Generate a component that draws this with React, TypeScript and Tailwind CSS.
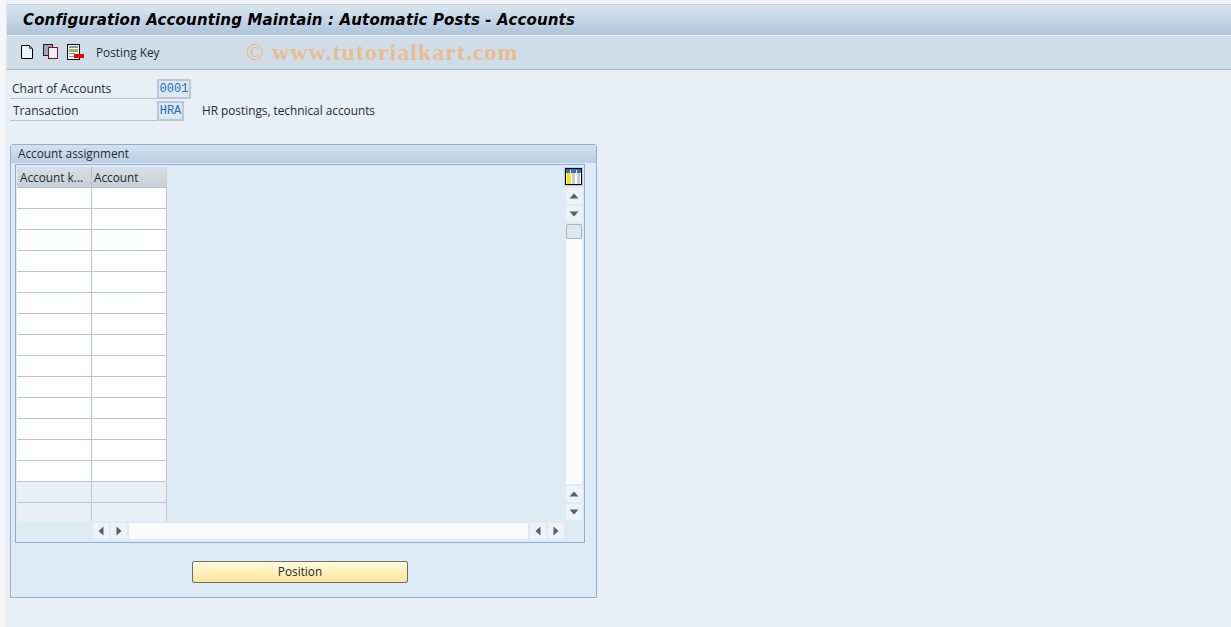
const rows = Array.from({ length: 14 });

function ScrollBtn({ dir }: { dir: 'up' | 'down' | 'left' | 'right' }) {
  const points = {
    up: '0.5,7.5 5,2.5 9.5,7.5',
    down: '0.5,2.5 5,7.5 9.5,2.5',
    left: '7.5,0.5 2.5,5 7.5,9.5',
    right: '2.5,0.5 7.5,5 2.5,9.5',
  }[dir];
  return (
    <div className="w-[16px] h-[16px] bg-[#eef3f9] flex items-center justify-center">
      <svg width="10" height="10" viewBox="0 0 10 10">
        <polygon points={points} fill="#4d6072" />
      </svg>
    </div>
  );
}

export default function App() {
  return (
    <div className="relative w-[1231px] h-[627px] overflow-hidden flex bg-[#f3f6fa] text-[11.8px] text-[#1c2a36] font-['Open_Sans','Noto_Sans',sans-serif]">
      {/* left strip */}
      <div className="w-[7px] shrink-0 bg-[#f4f6f9] border-r border-[#dfe5ec]" />

      <div className="flex-1 flex flex-col">
        <div className="h-[5px] bg-[#f1f3f7] border-b border-[#c3ccd8]" />

        {/* Title */}
        <div className="h-[31px] flex items-center pl-[16px] bg-gradient-to-b from-[#dbe6f0] to-[#aec4da] border-b border-[#e8eef4]">
          <h1 className="font-['DejaVu_Sans',sans-serif] text-[15px] tracking-[0.15px] font-bold italic text-black whitespace-nowrap">
            Configuration Accounting Maintain : Automatic Posts - Accounts
          </h1>
        </div>

        {/* Toolbar */}
        <div className="h-[34px] flex items-center pl-[13px] bg-[#cfdde8] border-b border-[#a9b6c3]">
          <svg className="mb-[2px]" width="14" height="16" viewBox="0 0 14 16">
            <path d="M1.5 1.5H9.5L12.5 4.5V14.5H1.5Z" fill="#eaf5fb" stroke="#000" />
            <path d="M9.5 1.5V4.5H12.5" fill="#7d8b96" stroke="#555" />
          </svg>
          <svg className="ml-[9px] mb-[2px]" width="15" height="15" viewBox="0 0 15 15">
            <rect x="0.5" y="0.5" width="9" height="11" fill="#9fa6ad" stroke="#222" />
            <rect x="5.5" y="3.5" width="9" height="11" fill="#e6f2fb" stroke="#8c1018" />
          </svg>
          <svg className="ml-[9px] mb-[2px]" width="17" height="16" viewBox="0 0 17 16">
            <rect x="0.5" y="0.5" width="12" height="15" fill="#eef3f6" stroke="#111" />
            <rect x="2" y="2" width="9" height="2" fill="#8b96a8" />
            <rect x="2" y="5" width="9" height="3" fill="#9fbb4a" />
            <rect x="2" y="9" width="6" height="1" fill="#8b96a8" />
            <rect x="2" y="12" width="6" height="1" fill="#8b96a8" />
            <rect x="7" y="10" width="10" height="4" fill="#ee0000" />
          </svg>
          <span className="ml-[12px]">Posting Key</span>
        </div>

        {/* Content */}
        <div className="flex-1 bg-[#e8eff7] pt-[7px] pl-[3px] flex flex-col">
          <div className="flex items-end h-[22px]">
            <div className="w-[147px] h-[20px] pl-[2px] border-b border-[#b8c2cc] leading-[20px] text-[12px]">Chart of Accounts</div>
            <div className="w-[34px] h-[20px] bg-[#dce8f2] border-2 border-[#bcc8d2] font-['Liberation_Mono',monospace] text-[12px] text-[#2a6eb0] leading-[16px] text-center">0001</div>
          </div>
          <div className="flex items-end h-[22px]">
            <div className="w-[147px] h-[20px] pl-[3px] border-b border-[#b8c2cc] leading-[20px] text-[12px]">Transaction</div>
            <div className="w-[27px] h-[20px] bg-[#dce8f2] border-2 border-[#bcc8d2] font-['Liberation_Mono',monospace] text-[12px] text-[#2a6eb0] leading-[16px] text-center">HRA</div>
            <span className="ml-[18px] h-[20px] leading-[18px]">HR postings, technical accounts</span>
          </div>

          {/* Panel */}
          <div className="mt-[23px] w-[587px] h-[454px] flex flex-col bg-[#deeaf4] border border-[#8fb0d0] rounded-t-[3px]">
            <div className="h-[18px] pl-[7px] leading-[16px] bg-gradient-to-b from-[#d3e2f0] to-[#b9cfe4]">Account assignment</div>
            <div className="mt-[1px] ml-[4px] w-[570px] h-[379px] border border-[#8fb0d0] flex flex-col">
              <div className="flex-1 flex min-h-0">
                {/* Table */}
                <div className="w-[150px] ml-[1px] mt-[2px] flex flex-col">
                  <div className="h-[21px] flex bg-gradient-to-b from-[#d9dfe6] to-[#c6ced7] border-b border-[#b8c2cc]">
                    <div className="w-[75px] pl-[3px] leading-[20px] border-r border-[#b8c2cc] whitespace-nowrap">Account k...</div>
                    <div className="w-[75px] pl-[2px] leading-[20px]">Account</div>
                  </div>
                  {rows.map((_, i) => (
                    <div key={i} className="h-[21px] flex bg-white border-b border-[#bcc6d2]">
                      <div className="w-[75px] border-r border-[#bcc6d2]" />
                      <div className="w-[75px] border-r border-[#bcc6d2]" />
                    </div>
                  ))}
                  <div className="h-[21px] flex bg-[#e8eff7] border-b border-[#bcc6d2]">
                    <div className="w-[75px] border-r border-[#bcc6d2]" />
                    <div className="w-[75px] border-r border-[#bcc6d2]" />
                  </div>
                  <div className="h-[18px] flex bg-[#e8eff7]">
                    <div className="w-[75px] border-r border-[#bcc6d2]" />
                    <div className="w-[75px] border-r border-[#bcc6d2]" />
                  </div>
                </div>

                <div className="flex-1" />

                {/* Vertical scrollbar */}
                <div className="w-[19px] mr-[1px] mt-[2px] flex flex-col items-center">
                  <div className="w-[19px] h-[19px] bg-[#c3ccd6] flex items-center justify-center">
                    <svg width="17" height="17" viewBox="0 0 17 17">
                      <rect x="0.5" y="0.5" width="16" height="16" fill="#fff" stroke="#000" />
                      <rect x="1" y="1" width="15" height="4" fill="#2f74b8" />
                      <rect x="5" y="2" width="1" height="3" fill="#dfe7ee" />
                      <rect x="11" y="2" width="1" height="3" fill="#dfe7ee" />
                      <rect x="2" y="5" width="4" height="11" fill="#ffe000" />
                      <rect x="6" y="5" width="1" height="11" fill="#fff" />
                      <rect x="7" y="5" width="3" height="11" fill="#c5ccd4" />
                      <rect x="12" y="5" width="3" height="11" fill="#c5ccd4" />
                    </svg>
                  </div>
                  <div className="mt-[2px]"><ScrollBtn dir="up" /></div>
                  <div className="mt-[2px]"><ScrollBtn dir="down" /></div>
                  <div className="w-[16px] flex-1 mt-[2px] bg-[#fafbfc]">
                    <div className="w-[16px] h-[15px] bg-[#dfe7ee] border border-[#a9b4bf] rounded-[1px]" />
                  </div>
                  <div className="mt-[2px]"><ScrollBtn dir="up" /></div>
                  <div className="mt-[2px] mb-[1px]"><ScrollBtn dir="down" /></div>
                </div>
              </div>

              {/* Horizontal scrollbar */}
              <div className="h-[21px] pt-[2px] pl-[77px] flex items-start gap-[2px]">
                <ScrollBtn dir="left" />
                <ScrollBtn dir="right" />
                <div className="w-[399px] h-[16px] bg-[#fafbfc]" />
                <ScrollBtn dir="left" />
                <ScrollBtn dir="right" />
              </div>
            </div>

            <div className="flex-1 flex items-start pt-[18px] pl-[181px]">
              <button className="w-[216px] h-[22px] bg-gradient-to-b from-[#fffbdc] to-[#fde598] border border-[#6f6e66] rounded-[2px] text-[11.8px] text-[#1c2a36]">
                Position
              </button>
            </div>
          </div>
        </div>
      </div>

      {/* watermark */}
      <div className="absolute left-[246px] top-[34px] font-['Liberation_Serif',serif] font-bold text-[24px] tracking-[1px] text-[#e8bd8f] whitespace-nowrap">
        © www.tutorialkart.com
      </div>
    </div>
  );
}
